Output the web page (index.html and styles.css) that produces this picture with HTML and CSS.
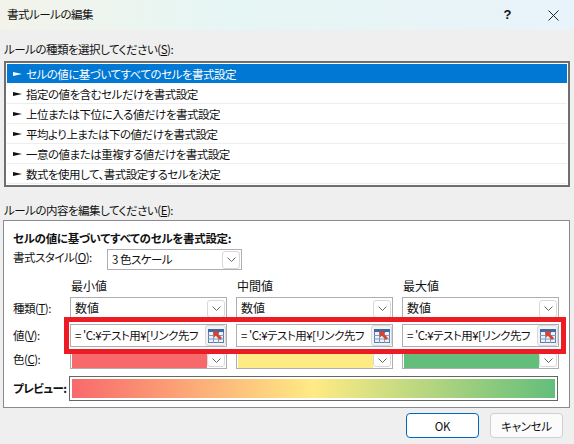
FILE: index.html

```html
<!DOCTYPE html>
<html lang="ja">
<head>
  <meta charset="UTF-8" />
  <title>書式ルールの編集</title>
  <link rel="stylesheet" href="styles.css">
</head>
<body>
  <div class="dialog">
    <div class="titlebar">
      <span class="title">書式ルールの編集</span>
      <span class="help">?</span>
      <svg class="close" width="11" height="11" viewBox="0 0 11 11"><path d="M0.5 0.5L10.5 10.5M10.5 0.5L0.5 10.5" stroke="#222" stroke-width="1" fill="none"/></svg>
    </div>

    <div class="content">
      <div class="label">ルールの種類を選択してください(<u>S</u>):</div>
      <div class="rule-list">
        <div class="rule selected"><span class="arrow"></span>セルの値に基づいてすべてのセルを書式設定</div>
        <div class="rule"><span class="arrow"></span>指定の値を含むセルだけを書式設定</div>
        <div class="rule"><span class="arrow"></span>上位または下位に入る値だけを書式設定</div>
        <div class="rule"><span class="arrow"></span>平均より上または下の値だけを書式設定</div>
        <div class="rule"><span class="arrow"></span>一意の値または重複する値だけを書式設定</div>
        <div class="rule"><span class="arrow"></span>数式を使用して、書式設定するセルを決定</div>
      </div>

      <div class="label second">ルールの内容を編集してください(<u>E</u>):</div>
      <div class="group">
        <div class="group-title">セルの値に基づいてすべてのセルを書式設定:</div>
        <div class="style-row">
          <span class="style-label">書式スタイル(<u>O</u>):</span>
          <div class="combo style-combo"><span class="combo-text">3 色スケール</span><span class="drop"><svg width="9" height="5" viewBox="0 0 9 5"><path d="M0.5 0.5L4.5 4.5L8.5 0.5" stroke="#666" fill="none"/></svg></span></div>
        </div>

        <div class="grid">
          <span></span>
          <span class="head">最小値</span>
          <span class="head">中間値</span>
          <span class="head">最大値</span>

          <span class="row-label">種類(<u>T</u>):</span>
          <div class="combo"><span class="combo-text">数値</span><span class="drop"><svg width="9" height="5" viewBox="0 0 9 5"><path d="M0.5 0.5L4.5 4.5L8.5 0.5" stroke="#666" fill="none"/></svg></span></div>
          <div class="combo"><span class="combo-text">数値</span><span class="drop"><svg width="9" height="5" viewBox="0 0 9 5"><path d="M0.5 0.5L4.5 4.5L8.5 0.5" stroke="#666" fill="none"/></svg></span></div>
          <div class="combo"><span class="combo-text">数値</span><span class="drop"><svg width="9" height="5" viewBox="0 0 9 5"><path d="M0.5 0.5L4.5 4.5L8.5 0.5" stroke="#666" fill="none"/></svg></span></div>

          <span class="row-label">値(<u>V</u>):</span>
          <div class="ref-input"><span class="ref-text">= 'C:¥テスト用¥[リンク先フ</span><span class="ref-btn"><svg width="16" height="14" viewBox="0 0 16 14"><rect x="0.5" y="0.5" width="15" height="13" fill="#eef3fa" stroke="#5b7db0"/><rect x="0" y="0" width="16" height="3" fill="#3f6aa8"/><path d="M0 6.5H16M0 10H16M5.5 3V14M10.5 3V14" stroke="#7d9ac6"/><path d="M5 2L11.5 3L9.8 4.8L14 9L12 11L7.8 6.8L6 8.5Z" fill="#d9432b"/></svg></span></div>
          <div class="ref-input"><span class="ref-text">= 'C:¥テスト用¥[リンク先フ</span><span class="ref-btn"><svg width="16" height="14" viewBox="0 0 16 14"><rect x="0.5" y="0.5" width="15" height="13" fill="#eef3fa" stroke="#5b7db0"/><rect x="0" y="0" width="16" height="3" fill="#3f6aa8"/><path d="M0 6.5H16M0 10H16M5.5 3V14M10.5 3V14" stroke="#7d9ac6"/><path d="M5 2L11.5 3L9.8 4.8L14 9L12 11L7.8 6.8L6 8.5Z" fill="#d9432b"/></svg></span></div>
          <div class="ref-input"><span class="ref-text">= 'C:¥テスト用¥[リンク先フ</span><span class="ref-btn"><svg width="16" height="14" viewBox="0 0 16 14"><rect x="0.5" y="0.5" width="15" height="13" fill="#eef3fa" stroke="#5b7db0"/><rect x="0" y="0" width="16" height="3" fill="#3f6aa8"/><path d="M0 6.5H16M0 10H16M5.5 3V14M10.5 3V14" stroke="#7d9ac6"/><path d="M5 2L11.5 3L9.8 4.8L14 9L12 11L7.8 6.8L6 8.5Z" fill="#d9432b"/></svg></span></div>

          <span class="row-label">色(<u>C</u>):</span>
          <div class="color-combo"><span class="swatch red"></span><span class="drop"><svg width="9" height="5" viewBox="0 0 9 5"><path d="M0.5 0.5L4.5 4.5L8.5 0.5" stroke="#666" fill="none"/></svg></span></div>
          <div class="color-combo"><span class="swatch yellow"></span><span class="drop"><svg width="9" height="5" viewBox="0 0 9 5"><path d="M0.5 0.5L4.5 4.5L8.5 0.5" stroke="#666" fill="none"/></svg></span></div>
          <div class="color-combo"><span class="swatch green"></span><span class="drop"><svg width="9" height="5" viewBox="0 0 9 5"><path d="M0.5 0.5L4.5 4.5L8.5 0.5" stroke="#666" fill="none"/></svg></span></div>
        </div>

        <div class="preview-row">
          <span class="preview-label">プレビュー:</span>
          <div class="preview"><div class="gradient"></div></div>
        </div>

        <div class="highlight"></div>
      </div>

      <div class="buttons">
        <button class="btn default">OK</button>
        <button class="btn">キャンセル</button>
      </div>
    </div>
  </div>
</body>
</html>
```

FILE: styles.css

```css
html, body {
  margin: 0;
  padding: 0;
  height: 100%;
  overflow: hidden;
  background-color: #efefef;
}
body {
  font-family: "Noto Sans CJK JP", "Open Sans", sans-serif;
  font-feature-settings: "palt";
  font-size: 11.5px;
  letter-spacing: -0.5px;
  color: #111;
}
.titlebar {
  height: 30px;
  display: flex;
  align-items: center;
  padding: 0 15px 0 7px;
  background: linear-gradient(90deg, #f3f3ea 0%, #e6f6f4 40%, #e8f4f6 70%, #e9f3fb 100%);
}
.title {
  flex: 1;
  padding-bottom: 2px;
}
.help {
  font-family: "Liberation Sans", sans-serif;
  font-size: 13px;
  font-weight: bold;
  margin-right: 37px;
  padding-bottom: 2px;
}
.content {
  padding: 10px 4px 0 3px;
}
.label {
  height: 21px;
  line-height: 19px;
  padding-left: 1px;
}
.label.second {
  height: 20px;
  line-height: 20px;
  margin-top: 13px;
}
.rule-list {
  margin-left: 1px;
  border: 2px solid #6f6f6f;
  padding: 1px;
  background-color: white;
  height: 120px;
}
.rule {
  height: 18px;
  line-height: 18px;
  display: flex;
  align-items: center;
  border-bottom: 1px solid #eee;
  padding: 1px 0 0 6px;
}
.rule.selected {
  background-color: #0078d4;
  color: white;
  border-bottom: none;
  margin-bottom: 1px;
}
.arrow {
  width: 13px;
  height: 5px;
  flex: none;
  position: relative;
}
.arrow::after {
  content: "";
  position: absolute;
  left: 0;
  top: 0;
  border-left: 9px solid #111;
  border-top: 2.5px solid transparent;
  border-bottom: 2.5px solid transparent;
}
.selected .arrow::after {
  border-left-color: white;
}
.group {
  position: relative;
  height: 186px;
  border: 1px solid #8a8a90;
  background-color: white;
  padding: 0 0 0 9px;
}
.group-title {
  font-weight: bold;
  letter-spacing: -0.3px;
  height: 20px;
  line-height: 20px;
  margin-top: 7px;
}
.style-row {
  display: flex;
  align-items: flex-start;
  height: 28px;
  margin-top: 1px;
}
.style-label {
  width: 94px;
  line-height: 16px;
}
.combo, .color-combo, .ref-input {
  display: flex;
  align-items: center;
  border: 1px solid #adadb2;
  background-color: white;
  box-sizing: border-box;
}
.style-combo {
  width: 135px;
  height: 21px;
}
.combo-text {
  flex: 1;
  padding: 0 0 2px 4px;
}
.grid .combo-text, .head {
  font-size: 12px;
  letter-spacing: 0;
}
.drop {
  width: 18px;
  height: 18px;
  margin-right: 1px;
  flex: none;
  display: flex;
  align-items: center;
  justify-content: center;
  border: 1px solid #d8d8d8;
  border-radius: 3px;
  box-sizing: border-box;
}
.grid {
  display: grid;
  grid-template-columns: 48px 157px 157px 157px;
  grid-template-rows: 16px 23px 23px 18px;
  column-gap: 9px;
  row-gap: 4px;
  align-items: center;
}
.grid > .combo, .grid > .ref-input, .grid > .color-combo {
  height: 100%;
}
.head {
  padding-left: 1px;
}
.grid .row-label {
  white-space: nowrap;
  padding-bottom: 2px;
}
.ref-text {
  flex: 1;
  min-width: 0;
  overflow: hidden;
  white-space: nowrap;
  margin: 0 2px 0 4px;
  padding-bottom: 1px;
}
.ref-btn {
  width: 21px;
  height: 21px;
  flex: none;
  display: flex;
  align-items: center;
  justify-content: center;
  background-color: #f3f3f3;
  border: 1px solid #d8d8d8;
  border-radius: 3px;
  box-sizing: border-box;
}
.color-combo .drop {
  height: 14px;
}
.swatch {
  flex: 1;
  height: 100%;
  margin: 1px 0 2px 1px;
}
.swatch.red { background-color: #f8696b; }
.swatch.yellow { background-color: #ffeb84; }
.swatch.green { background-color: #63be7b; }
.preview-row {
  display: flex;
  align-items: center;
  margin-top: 7px;
}
.preview-label {
  flex: none;
  width: 56px;
  font-weight: bold;
  white-space: nowrap;
  padding-bottom: 2px;
}
.preview {
  width: 489px;
  height: 25px;
  box-sizing: border-box;
  border: 1px solid #666;
  padding: 2px;
}
.gradient {
  height: 100%;
  background: linear-gradient(90deg, #f8696b 0%, #ffeb84 50%, #63be7b 100%);
}
.highlight {
  position: absolute;
  left: 60px;
  top: 96px;
  width: 492px;
  height: 27px;
  border: 5px solid #ed1c24;
}
.buttons {
  display: flex;
  justify-content: flex-end;
  gap: 11px;
  margin-top: 5px;
  padding-right: 7px;
}
.btn {
  width: 73px;
  height: 25px;
  padding: 0;
  font-family: inherit;
  font-feature-settings: inherit;
  font-size: 11.5px;
  letter-spacing: -0.3px;
  color: #111;
  background-color: #fbfbfb;
  border: 1px solid #d0d0d0;
  border-radius: 4px;
}
.btn.default {
  background-color: white;
  border: 1.5px solid #0067c0;
}
```
